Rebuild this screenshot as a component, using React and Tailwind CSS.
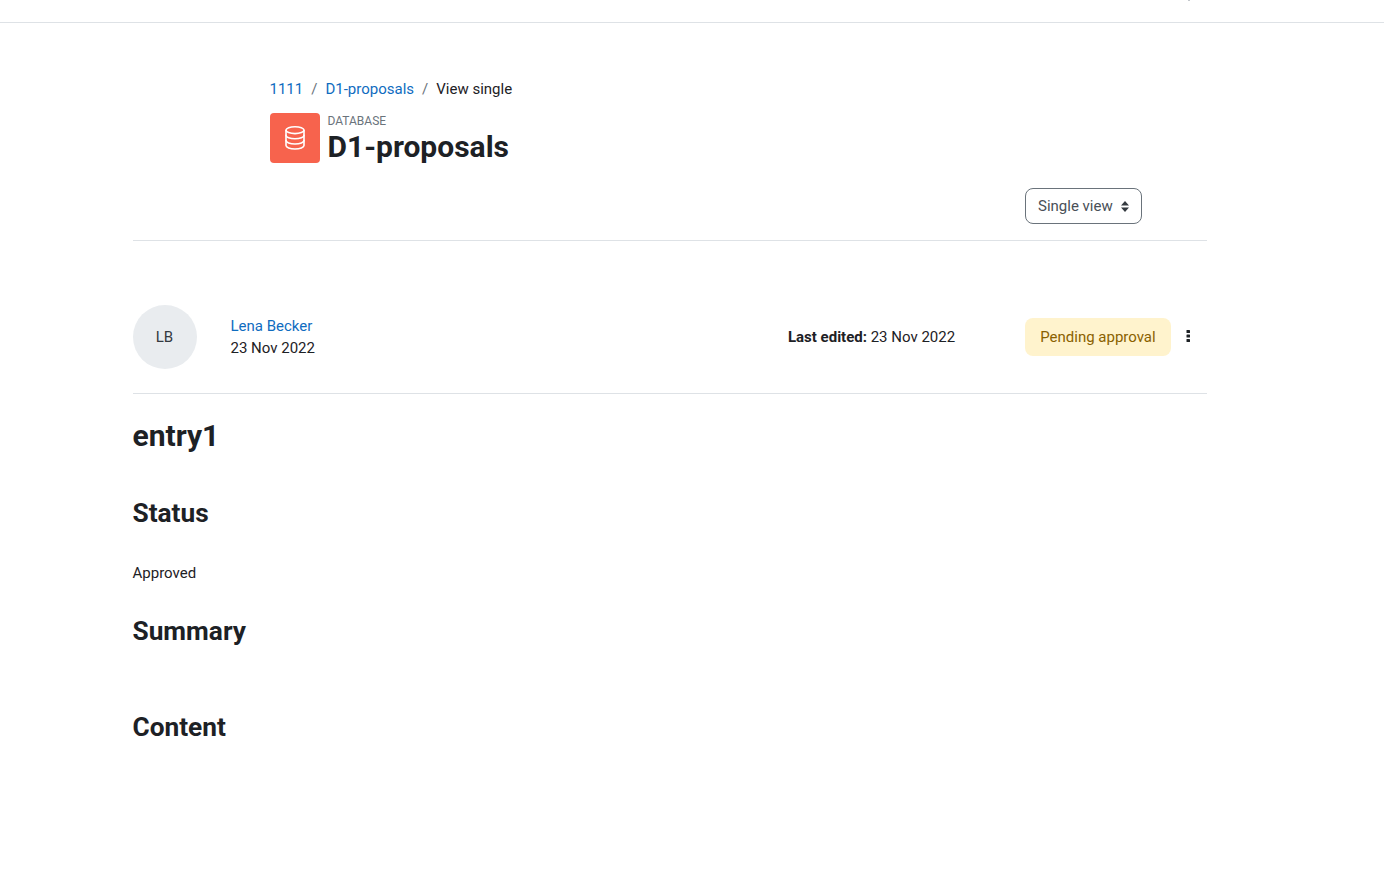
import React from 'react'

const DatabaseIcon = () => (
  <svg width="20" height="24" viewBox="0 0 20 24" fill="none" stroke="#fff" strokeWidth="1.6" strokeLinecap="round" strokeLinejoin="round">
    <ellipse cx="10" cy="4.2" rx="9" ry="3.4" />
    <path d="M1 4.2v15.4c0 1.8 4 3.4 9 3.4s9-1.6 9-3.4V4.2" />
    <path d="M1 9.4c0 1.8 4 3.4 9 3.4s9-1.6 9-3.4" />
    <path d="M1 14.6c0 1.8 4 3.4 9 3.4s9-1.6 9-3.4" />
  </svg>
)

const SortIcon = () => (
  <svg width="8" height="11" viewBox="0 0 8 11" fill="#343a40">
    <path d="M4 0l4 4.4H0zM4 11L0 6.6h8z" />
  </svg>
)

const KebabIcon = () => (
  <svg width="4" height="12" viewBox="0 0 4 12" fill="#1d2125">
    <rect x="0.5" y="0" width="3.5" height="3" rx="0.6" />
    <rect x="0.5" y="4.5" width="3.5" height="3" rx="0.6" />
    <rect x="0.5" y="9" width="3.5" height="3" rx="0.6" />
  </svg>
)

export default function App() {
  return (
    <div className="min-h-[885px] bg-white text-[#1d2125] font-['Roboto',sans-serif] text-[15px] leading-[22px]">
      <header className="h-[23px] border-b border-[#dee2e6] flex justify-end pr-[194px]">
        <span className="w-[2px] h-[1px] bg-[#c4c8cc]" />
      </header>

      <div className="ml-[132.5px] w-[1074.5px]">
        <div className="h-[218px] border-b border-[#dee2e6] pl-[137px] pt-[55px]">
          <nav className="flex items-center h-[22px]">
            <a className="text-[#0f6cbf]">1111</a>
            <span className="px-[8px] text-[#6a737b]">/</span>
            <a className="text-[#0f6cbf]">D1-proposals</a>
            <span className="px-[8px] text-[#6a737b]">/</span>
            <span>View single</span>
          </nav>
          <div className="flex mt-[13px]">
            <div className="w-[50px] h-[50px] rounded-[4px] bg-[#f7634d] flex items-center justify-center">
              <DatabaseIcon />
            </div>
            <div className="ml-[8px]">
              <div className="text-[12px] leading-[16px] text-[#6a737b]">DATABASE</div>
              <h1 className="text-[30px] leading-[36px] font-bold">D1-proposals</h1>
            </div>
          </div>
          <div className="flex mt-[23px] ml-[755.5px]">
            <button className="w-[117px] h-[36px] flex items-center justify-between pl-[12px] pr-[12px] border border-[#6a737b] rounded-[8px] text-[#495057]">
              <span>Single view</span>
              <SortIcon />
            </button>
          </div>
        </div>

        <div className="h-[153px] border-b border-[#dee2e6] flex items-center pt-[39px]">
          <div className="w-[64px] h-[64px] rounded-full bg-[#e9ecef] flex items-center justify-center text-[#343a40]">LB</div>
          <div className="ml-[34px]">
            <a className="block text-[#0f6cbf]">Lena Becker</a>
            <div>23 Nov 2022</div>
          </div>
          <div className="ml-[473px] w-[237px]"><b className="font-bold">Last edited:</b> 23 Nov 2022</div>
          <div className="w-[146px] h-[38px] rounded-[8px] bg-[#fff3cd] text-[#8a6100] flex items-center justify-center">Pending approval</div>
          <div className="ml-[15.5px] -mt-[2px] flex"><KebabIcon /></div>
        </div>

        <h2 className="mt-[24px] text-[30px] leading-[36px] font-bold">entry1</h2>
        <h3 className="mt-[43px] text-[26.25px] leading-[32px] font-bold">Status</h3>
        <p className="mt-[33px]">Approved</p>
        <h3 className="mt-[31px] text-[26.25px] leading-[32px] font-bold">Summary</h3>
        <h3 className="mt-[64px] text-[26.25px] leading-[32px] font-bold">Content</h3>
      </div>
    </div>
  )
}
